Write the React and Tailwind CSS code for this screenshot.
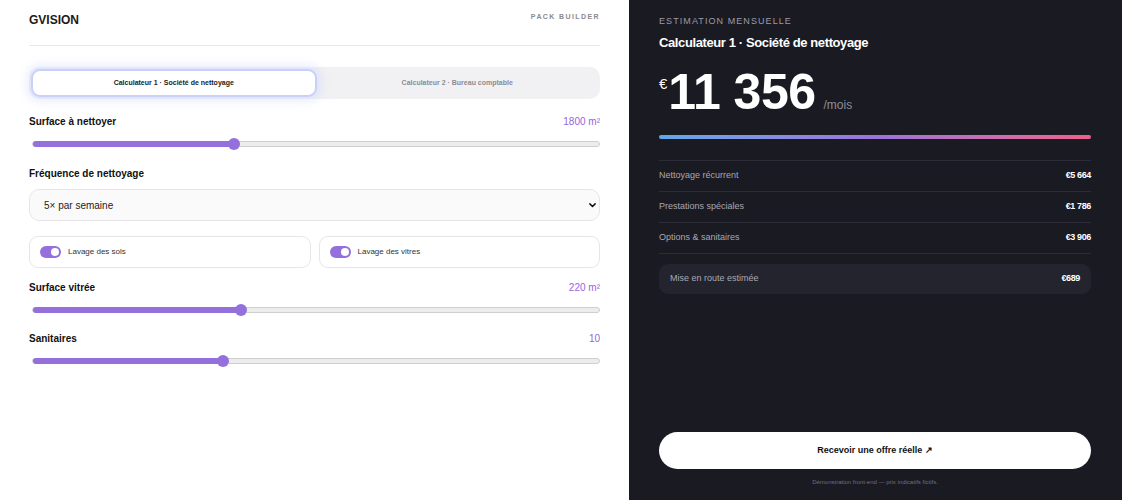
import React, { useState } from 'react';

const FONT = { fontFamily: '"Liberation Sans", Arial, sans-serif' };

const Slider = ({ label, value, unit, pct }) => (
  <div>
    <div className="mt-[15px] flex items-center justify-between h-[14px]">
      <span className="text-[10px] font-bold text-[#111]">{label}</span>
      <span className="text-[10px] text-[#9466dd]">
        {value}
        {unit}
      </span>
    </div>
    <div className="mt-[10px] h-[12px] flex items-center pl-[3px]">
      <div className="relative w-full h-[6px] rounded-full bg-[#ececec] border border-[#cfcfcf]">
        <div
          className="absolute left-0 top-[-1px] h-[6px] rounded-full bg-[#9370db]"
          style={{ width: `${pct}%` }}
        />
        <div
          className="absolute top-1/2 w-[12px] h-[12px] -translate-x-1/2 -translate-y-1/2 rounded-full bg-[#9370db]"
          style={{ left: `${pct}%` }}
        />
      </div>
    </div>
  </div>
);

const Toggle = ({ label }) => (
  <div className="flex-1 h-[32px] flex items-center gap-[7px] px-[10px] border border-[#e6e6ea] rounded-[9px] bg-white">
    <div className="w-[21px] h-[12px] rounded-full bg-[#9370db] flex items-center justify-end pr-[2px]">
      <div className="w-[8px] h-[8px] rounded-full bg-white" />
    </div>
    <span className="text-[8px] text-[#333]">{label}</span>
  </div>
);

const Row = ({ label, amount }) => (
  <div className="h-[31px] flex items-center justify-between border-b border-[#2c2c38]">
    <span className="text-[9px] text-[#a8a8b3]">{label}</span>
    <span className="text-[9px] font-bold tracking-[-0.04em] text-white">{amount}</span>
  </div>
);

export default function App() {
  const [tab, setTab] = useState(0);

  return (
    <div className="flex w-[1122px] h-[500px] overflow-hidden" style={FONT}>
      {/* configurator */}
      <div className="w-[629px] h-full bg-white px-[29px]">
        <div className="pt-[12px] pb-[17px] flex justify-between border-b border-[#e8e8ec]">
          <span className="text-[12px] leading-4 font-bold text-[#1a1a1a]">GVISION</span>
          <span className="text-[7px] leading-4 mt-[-3px] font-bold tracking-[0.2em] text-[#8a8a92]">
            PACK BUILDER
          </span>
        </div>

        <div className="mt-[21px] h-[32px] p-[2px] flex rounded-[10px] bg-[#f1f1f4]">
          {['Calculateur 1 · Société de nettoyage', 'Calculateur 2 · Bureau comptable'].map(
            (t, i) => (
              <button
                key={t}
                onClick={() => setTab(i)}
                className={`flex-1 h-[28px] rounded-[9px] text-[7px] font-bold ${
                  tab === i
                    ? 'bg-white text-[#222] border-2 border-[#c9d0fb] shadow-[0_0_10px_4px_rgba(190,200,252,0.35)]'
                    : 'text-[#8c8c94]'
                }`}
              >
                {t}
              </button>
            )
          )}
        </div>

        <Slider label="Surface à nettoyer" value="1800" unit=" m²" pct={35.6} />

        <div className="mt-[16px] h-[14px] flex items-center">
          <span className="text-[10px] font-bold text-[#111]">Fréquence de nettoyage</span>
        </div>
        <div className="relative mt-[9px]">
          <select
            defaultValue="5"
            className="w-full h-[32px] appearance-none pl-[14px] text-[10px] text-[#222] bg-[#fafafa] border border-[#e6e6ea] rounded-[10px] outline-none"
            style={FONT}
          >
            <option value="3">3× par semaine</option>
            <option value="5">5× par semaine</option>
          </select>
          <svg
            className="absolute right-[3px] top-1/2 -translate-y-1/2 w-[9px] h-[9px] text-[#111] pointer-events-none"
            viewBox="0 0 24 24"
            fill="none"
            stroke="currentColor"
            strokeWidth="4"
            strokeLinecap="round"
            strokeLinejoin="round"
          >
            <path d="M5 9l7 7 7-7" />
          </svg>
        </div>

        <div className="mt-[15px] flex gap-[8px]">
          <Toggle label="Lavage des sols" />
          <Toggle label="Lavage des vitres" />
        </div>

        <div className="mt-[-3px]">
          <Slider label="Surface vitrée" value="220" unit=" m²" pct={36.8} />
        </div>
        <div className="mt-[1px]">
          <Slider label="Sanitaires" value="10" unit="" pct={33.6} />
        </div>
      </div>

      {/* estimate */}
      <div className="flex-1 h-full bg-[#1a1a22] pl-[30px] pr-[31px] pt-[15px] pb-[14px] flex flex-col">
        <div className="text-[9px] leading-3 tracking-[0.12em] text-[#9c9ca8]">ESTIMATION MENSUELLE</div>
        <div className="mt-[8px] text-[13px] leading-4 font-bold tracking-[-0.03em] text-white">
          Calculateur 1 · Société de nettoyage
        </div>

        <div className="mt-[16px] flex items-baseline">
          <span className="self-start mt-[9px] text-[15px] leading-none text-white mr-[1px]">€</span>
          <span className="text-[50px] leading-none font-bold tracking-[-0.01em] text-white">11 356</span>
          <span className="ml-[8px] text-[12px] leading-none text-[#8e8e9a]">/mois</span>
        </div>

        <div className="mt-[18px] h-[4px] rounded-full bg-gradient-to-r from-[#5ea8ea] via-[#9b73d9] to-[#ee5f8b]" />

        <div className="mt-[21px] border-t border-[#2c2c38]">
          <Row label="Nettoyage récurrent" amount="€5 664" />
          <Row label="Prestations spéciales" amount="€1 786" />
          <Row label="Options & sanitaires" amount="€3 906" />
        </div>

        <div className="mt-[10px] h-[30px] px-[11px] flex items-center justify-between rounded-[9px] bg-[#24242e]">
          <span className="text-[9px] text-[#a8a8b3]">Mise en route estimée</span>
          <span className="text-[9px] font-bold tracking-[-0.04em] text-white">€689</span>
        </div>

        <button className="mt-auto h-[37px] w-full rounded-full bg-white text-[9px] font-bold text-[#111]">
          Recevoir une offre réelle ↗
        </button>
        <div className="mt-[9px] text-center text-[6px] leading-[8px] text-[#70707c]">
          Démonstration front-end — prix indicatifs fictifs.
        </div>
      </div>
    </div>
  );
}
